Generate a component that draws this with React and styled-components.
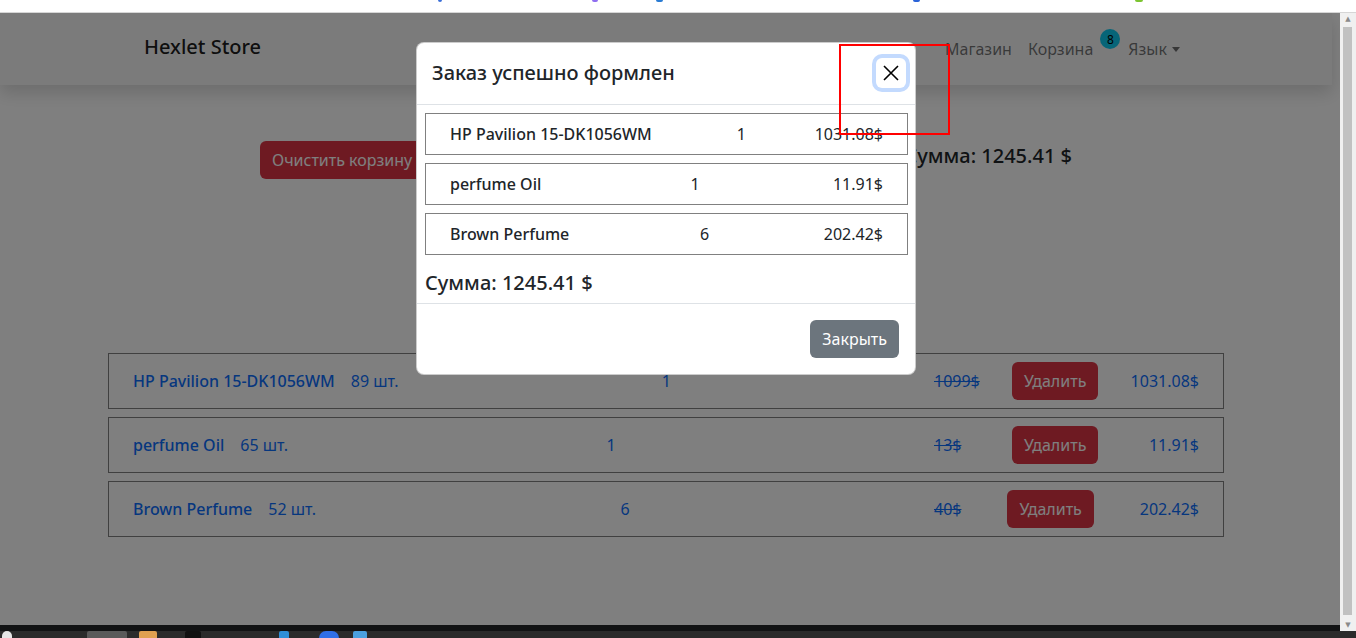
import React from 'react';
import styled, { createGlobalStyle } from 'styled-components';

const GlobalStyle = createGlobalStyle`
  html, body {
    margin: 0;
    padding: 0;
    width: 1356px;
    height: 638px;
    overflow: hidden;
  }
  body {
    font-family: "Noto Sans", "Open Sans", sans-serif;
    font-size: 16px;
    color: #212529;
    background: #fff;
  }
  * { box-sizing: border-box; }
`;

const Screen = styled.div`
  position: relative;
  width: 1356px;
  height: 638px;
  display: flex;
  flex-direction: column;
  overflow: hidden;
`;

const TopStrip = styled.div`
  height: 13px;
  background: #fff;
  border-bottom: 1px solid #d6d6d6;
  display: flex;
  align-items: flex-start;
`;

const Bit = styled.span`
  display: block;
  margin-left: ${p => p.gap}px;
  width: ${p => p.w || 6}px;
  height: 2px;
  background: ${p => p.color};
  border-radius: 0 0 3px 3px;
`;

const Middle = styled.div`
  display: flex;
  height: 618px;
`;

const PageColumn = styled.div`
  width: 1340px;
  display: flex;
  flex-direction: column;
`;

const Viewport = styled.div`
  position: relative;
  height: 612px;
  background: #fff;
  overflow: hidden;
`;

const DarkStrip = styled.div`
  height: 6px;
  background: #121314;
`;

const Scrollbar = styled.div`
  width: 16px;
  background: #f0f0f0;
  display: flex;
  flex-direction: column;
  align-items: center;
  padding: 2px 0;
`;

const ScrollArrow = styled.div`
  font-size: 7px;
  line-height: 8px;
  color: #8a8a8a;
  font-family: "DejaVu Sans", sans-serif;
`;

const ScrollThumb = styled.div`
  flex: 1;
  width: 9px;
  margin: 4px 1px 6px 0;
  background: #c1c1c1;
`;

const Taskbar = styled.div`
  height: 7px;
  background: #2b2b2b;
  display: flex;
  align-items: flex-start;
`;

const TaskIcon = styled.span`
  display: block;
  margin-left: ${p => p.gap}px;
  width: ${p => p.w}px;
  height: 7px;
  background: ${p => p.color};
  border-radius: ${p => (p.round ? '7px 7px 0 0' : '2px 2px 0 0')};
`;

const Page = styled.div`
  width: 1332px;
`;

const Navbar = styled.nav`
  position: relative;
  z-index: 1;
  height: 72px;
  background: #f6f6f7;
  box-shadow: 0 8px 16px rgba(0, 0, 0, 0.15);
`;

const NavInner = styled.div`
  width: 1116px;
  height: 100%;
  margin: 0 auto;
  padding: 0 36px;
  display: flex;
  align-items: center;
  justify-content: space-between;
`;

const Brand = styled.a`
  font-size: 20px;
  font-weight: 500;
  color: rgba(0, 0, 0, 0.9);
  margin-top: -6px;
`;

const NavLinks = styled.div`
  display: flex;
  align-items: center;
`;

const NavLink = styled.a`
  padding: 8px;
  color: rgba(0, 0, 0, 0.55);
  display: flex;
  align-items: center;
`;

const Badge = styled.span`
  width: 20px;
  height: 20px;
  margin-left: 7px;
  margin-right: -8px;
  border-radius: 50%;
  background: #0dcaf0;
  color: #000;
  font-size: 12px;
  display: flex;
  align-items: center;
  justify-content: center;
  transform: translateY(-10px);
`;

const Caret = styled.span`
  margin-left: 5px;
  border-top: 5px solid rgba(0, 0, 0, 0.55);
  border-left: 4px solid transparent;
  border-right: 4px solid transparent;
`;

const Container = styled.main`
  width: 1116px;
  margin: 0 auto;
`;

const ActionsRow = styled.div`
  margin-top: 56px;
  padding: 0 152px;
  display: flex;
  align-items: center;
  justify-content: space-between;
`;

const Button = styled.button`
  height: 38px;
  padding: 0 12px;
  border: none;
  border-radius: 6px;
  font-family: inherit;
  font-size: 16px;
  color: #fff;
  background: ${p => (p.variant === 'secondary' ? '#6c757d' : '#dc3545')};
`;

const Total = styled.h5`
  margin: ${p => (p.inModal ? '16px 0 0' : '0 0 8px')};
  font-size: 20px;
  font-weight: 500;
  line-height: 24px;
  color: #212529;
`;

const CartList = styled.div`
  margin-top: 174px;
  display: flex;
  flex-direction: column;
  gap: 8px;
`;

const CartRow = styled.div`
  height: 56px;
  padding: 0 24px;
  border: 1px solid #808080;
  display: flex;
  align-items: center;
  justify-content: space-between;
  color: #0d6efd;
`;

const NameGroup = styled.div`
  display: flex;
  align-items: baseline;
  gap: 16px;
`;

const Name = styled.span`
  font-weight: 500;
`;

const RightGroup = styled.div`
  width: 265px;
  display: flex;
  align-items: center;
  justify-content: space-between;
`;

const OldPrice = styled.span`
  text-decoration: line-through;
`;

const Backdrop = styled.div`
  position: absolute;
  inset: 0;
  z-index: 2;
  background: rgba(0, 0, 0, 0.5);
`;

const Modal = styled.div`
  position: absolute;
  z-index: 3;
  left: 416px;
  top: 29px;
  width: 500px;
  background: #fff;
  border: 1px solid rgba(0, 0, 0, 0.2);
  border-radius: 8px;
`;

const ModalHeader = styled.div`
  padding: 15px 16px 16px 15px;
  border-bottom: 1px solid #dee2e6;
  display: flex;
  align-items: center;
  justify-content: space-between;
`;

const ModalTitle = styled.h5`
  margin: 0;
  font-size: 20px;
  font-weight: 500;
  line-height: 30px;
`;

const CloseButton = styled.button`
  width: 30px;
  height: 30px;
  margin: -8px -7px -8px auto;
  padding: 0;
  border: none;
  border-radius: 6px;
  background: transparent;
  box-shadow: 0 0 0 4px #c3dafe;
  display: flex;
  align-items: center;
  justify-content: center;
`;

const ModalBody = styled.div`
  padding: 8px 7px 8px 8px;
`;

const OrderList = styled.div`
  display: flex;
  flex-direction: column;
  gap: 8px;
`;

const OrderRow = styled.div`
  height: 42px;
  padding: 0 24px;
  border: 1px solid #808080;
  display: flex;
  align-items: center;
  justify-content: space-between;
  color: #212529;
`;

const Qty = styled.span`
  padding-left: ${p => p.offset || 0}px;
`;

const ModalFooter = styled.div`
  padding: 12px;
  border-top: 1px solid #dee2e6;
  display: flex;
  justify-content: flex-end;
`;

const FooterButton = styled(Button)`
  margin: 4px;
`;

const Annotation = styled.div`
  position: absolute;
  z-index: 10;
  left: 839px;
  top: 44px;
  width: 111px;
  height: 91px;
  border: 2px solid #f00;
`;

const items = [
  { name: 'HP Pavilion 15-DK1056WM', stock: 89, qty: 1, old: '1099$', price: '1031.08$' },
  { name: 'perfume Oil', stock: 65, qty: 1, old: '13$', price: '11.91$' },
  { name: 'Brown Perfume', stock: 52, qty: 6, old: '40$', price: '202.42$' },
];

const bits = [
  { gap: 438, color: '#3b6fd8', w: 4 },
  { gap: 150, color: '#8f6ef0', w: 6 },
  { gap: 58, color: '#2a7bd3', w: 7 },
  { gap: 250, color: '#2a63d8', w: 7 },
  { gap: 215, color: '#7cc431', w: 8 },
];

const taskIcons = [
  { gap: 2, w: 10, color: '#e6e6e6', round: true },
  { gap: 75, w: 40, color: '#5a5a5a' },
  { gap: 12, w: 18, color: '#e0a050' },
  { gap: 28, w: 16, color: '#111' },
  { gap: 78, w: 10, color: '#2f8fd8' },
  { gap: 30, w: 20, color: '#2f6fe8', round: true },
  { gap: 14, w: 14, color: '#4aa0e0' },
];

const App = () => {
  return (
    <Screen>
      <GlobalStyle />
      <TopStrip>
        {bits.map((b, i) => <Bit key={i} {...b} />)}
      </TopStrip>
      <Middle>
        <PageColumn>
          <Viewport>
            <Page>
              <Navbar>
                <NavInner>
                  <Brand>Hexlet Store</Brand>
                  <NavLinks>
                    <NavLink>Магазин</NavLink>
                    <NavLink>Корзина<Badge>8</Badge></NavLink>
                    <NavLink>Язык<Caret /></NavLink>
                  </NavLinks>
                </NavInner>
              </Navbar>
              <Container>
                <ActionsRow>
                  <Button>Очистить корзину</Button>
                  <Total>Сумма: 1245.41 $</Total>
                </ActionsRow>
                <CartList>
                  {items.map(item => (
                    <CartRow key={item.name}>
                      <NameGroup>
                        <Name>{item.name}</Name>
                        <span>{item.stock} шт.</span>
                      </NameGroup>
                      <span>{item.qty}</span>
                      <RightGroup>
                        <OldPrice>{item.old}</OldPrice>
                        <Button>Удалить</Button>
                        <span>{item.price}</span>
                      </RightGroup>
                    </CartRow>
                  ))}
                </CartList>
              </Container>
            </Page>
            <Backdrop />
            <Modal>
              <ModalHeader>
                <ModalTitle>Заказ успешно формлен</ModalTitle>
                <CloseButton>
                  <svg width="18" height="18" viewBox="0 0 18 18">
                    <path d="M2 2 L16 16 M16 2 L2 16" stroke="#000" strokeWidth="1.6" />
                  </svg>
                </CloseButton>
              </ModalHeader>
              <ModalBody>
                <OrderList>
                  {items.map(item => (
                    <OrderRow key={item.name}>
                      <Name>{item.name}</Name>
                      <Qty offset={16}>{item.qty}</Qty>
                      <span>{item.price}</span>
                    </OrderRow>
                  ))}
                </OrderList>
                <Total inModal>Сумма: 1245.41 $</Total>
              </ModalBody>
              <ModalFooter>
                <FooterButton variant="secondary">Закрыть</FooterButton>
              </ModalFooter>
            </Modal>
          </Viewport>
          <DarkStrip />
        </PageColumn>
        <Scrollbar>
          <ScrollArrow>▲</ScrollArrow>
          <ScrollThumb />
          <ScrollArrow>▼</ScrollArrow>
        </Scrollbar>
      </Middle>
      <Taskbar>
        {taskIcons.map((t, i) => <TaskIcon key={i} {...t} />)}
      </Taskbar>
      <Annotation />
    </Screen>
  );
};

export default App;
